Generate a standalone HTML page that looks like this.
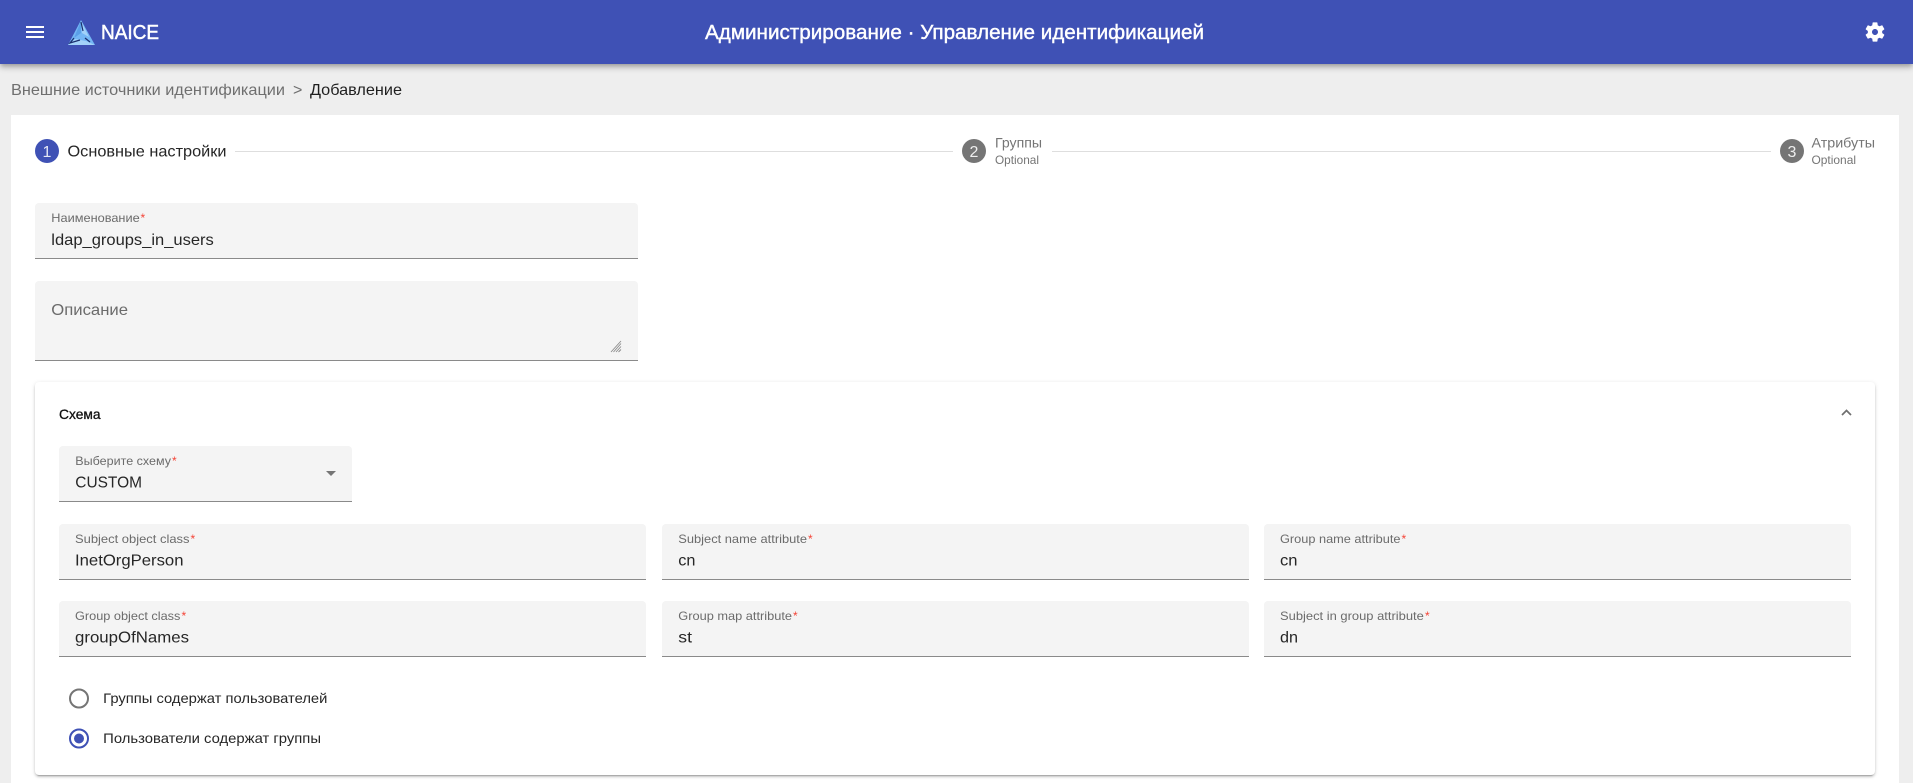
<!DOCTYPE html>
<html lang="ru">
<head>
<meta charset="utf-8">
<title>NAICE</title>
<style>
html,body{margin:0;padding:0;width:1913px;height:783px;overflow:hidden;background:#eeeeee;font-family:"Liberation Sans",sans-serif}
.abs{position:absolute}
#hdr{left:0;top:0;width:1913px;height:64px;background:#3f51b5;box-shadow:0 2px 4px -1px rgba(0,0,0,.2),0 4px 5px 0 rgba(0,0,0,.14),0 1px 10px 0 rgba(0,0,0,.12)}
#card{left:11px;top:115px;width:1888px;height:668px;background:#fff}
.f{position:absolute;background:#f4f4f4;border-radius:4px 4px 0 0;border-bottom:1px solid #8a8a8a;box-sizing:border-box}
#panel{left:35px;top:382px;width:1840px;height:393px;background:#fff;border-radius:4px;box-shadow:0 3px 1px -2px rgba(0,0,0,.2),0 2px 2px 0 rgba(0,0,0,.14),0 1px 5px 0 rgba(0,0,0,.12)}
.ln{position:absolute;top:151px;height:1px;background:#dedede}
svg{position:absolute;left:0;top:0}
text{font-family:"Liberation Sans",sans-serif}
.l{font-size:12px;fill:#6b6b6b}
.v{font-size:16px;fill:#262626}
.s{font-size:12px;fill:#f44336}
.r{font-size:14px;fill:#262626}
</style>
</head>
<body>
<div class="abs" id="hdr"></div>
<div class="abs" id="card"></div>
<div class="ln" style="left:235px;width:718px"></div>
<div class="ln" style="left:1052px;width:719px"></div>
<div class="f" style="left:35px;top:203px;width:603px;height:56px"></div>
<div class="f" style="left:35px;top:281px;width:603px;height:80px"></div>
<div class="abs" id="panel"></div>
<div class="f" style="left:59px;top:446px;width:293px;height:56px"></div>
<div class="f" style="left:59px;top:524px;width:587px;height:56px"></div>
<div class="f" style="left:662px;top:524px;width:587px;height:56px"></div>
<div class="f" style="left:1264px;top:524px;width:587px;height:56px"></div>
<div class="f" style="left:59px;top:601px;width:587px;height:56px"></div>
<div class="f" style="left:662px;top:601px;width:587px;height:56px"></div>
<div class="f" style="left:1264px;top:601px;width:587px;height:56px"></div>

<svg width="1913" height="783" viewBox="0 0 1913 783" xmlns="http://www.w3.org/2000/svg">
  <!-- menu -->
  <rect x="26" y="26" width="18" height="2" fill="#fff"/>
  <rect x="26" y="31" width="18" height="2" fill="#fff"/>
  <rect x="26" y="36" width="18" height="2" fill="#fff"/>
  <!-- logo -->
  <polygon points="81,20 95,45 68,45" fill="#74b6f5"/>
  <polygon points="81,21 89,37 82,33" fill="#a3d2f9"/>
  <polygon points="81,21 81,33 74,38" fill="#5a9fe8"/>
  <polygon points="68,45 75,39 86,41 95,45" fill="#a3d2f9"/>
  <path d="M81 22L83 31M74 38L70 43L80 40M85 38L90 42" stroke="#1a2f6e" stroke-width="1.2" fill="none"/>
  <text x="101" y="39" font-size="20.5" fill="#fff" stroke="#fff" stroke-width=".5" textLength="58" lengthAdjust="spacingAndGlyphs">NAICE</text>
  <text x="705" y="39" font-size="20" fill="#fff" stroke="#fff" stroke-width=".4" textLength="499" lengthAdjust="spacingAndGlyphs">Администрирование · Управление идентификацией</text>
  <!-- gear -->
  <path transform="translate(1863,20)" fill="#fff" d="M19.14 12.94c.04-.3.06-.61.06-.94 0-.32-.02-.64-.07-.94l2.03-1.58c.18-.14.23-.41.12-.61l-1.92-3.32c-.12-.22-.37-.29-.59-.22l-2.39.96c-.5-.38-1.03-.7-1.62-.94l-.36-2.54c-.04-.24-.24-.41-.48-.41h-3.84c-.24 0-.43.17-.47.41l-.36 2.54c-.59.24-1.13.57-1.62.94l-2.39-.96c-.22-.08-.47 0-.59.22L2.74 8.87c-.12.21-.08.47.12.61l2.03 1.58c-.05.3-.09.63-.09.94s.02.64.07.94l-2.03 1.58c-.18.14-.23.41-.12.61l1.92 3.32c.12.22.37.29.59.22l2.39-.96c.5.38 1.03.7 1.62.94l.36 2.54c.05.24.24.41.48.41h3.84c.24 0 .44-.17.47-.41l.36-2.54c.59-.24 1.13-.56 1.62-.94l2.39.96c.22.08.47 0 .59-.22l1.92-3.32c.12-.22.07-.47-.12-.61l-2.01-1.58zM12 15c-1.65 0-3-1.35-3-3s1.35-3 3-3 3 1.35 3 3-1.35 3-3 3z"/>
  <!-- breadcrumb -->
  <text x="11" y="95" font-size="16" fill="#6f6f6f" textLength="274" lengthAdjust="spacingAndGlyphs">Внешние источники идентификации</text>
  <text x="293" y="95" font-size="16" fill="#6f6f6f">&gt;</text>
  <text x="310" y="95" font-size="16" fill="#1f1f1f" textLength="92" lengthAdjust="spacingAndGlyphs">Добавление</text>
  <!-- stepper -->
  <circle cx="47" cy="151" r="12" fill="#3f51b5"/>
  <text x="47" y="157" font-size="16" fill="#e4e7f5" text-anchor="middle">1</text>
  <text x="67.5" y="156.5" font-size="16" fill="#262626" textLength="159" lengthAdjust="spacingAndGlyphs">Основные настройки</text>
  <circle cx="974" cy="151" r="12" fill="#757575"/>
  <text x="974" y="157" font-size="16" fill="#eeeeee" text-anchor="middle">2</text>
  <text x="995" y="147.5" font-size="14" fill="#757575" textLength="47" lengthAdjust="spacingAndGlyphs">Группы</text>
  <text x="995" y="164" font-size="12" fill="#757575" textLength="44" lengthAdjust="spacingAndGlyphs">Optional</text>
  <circle cx="1792" cy="151" r="12" fill="#757575"/>
  <text x="1792" y="157" font-size="16" fill="#eeeeee" text-anchor="middle">3</text>
  <text x="1811.5" y="147.5" font-size="14" fill="#757575" textLength="63.5" lengthAdjust="spacingAndGlyphs">Атрибуты</text>
  <text x="1811.5" y="164" font-size="12" fill="#757575" textLength="44.5" lengthAdjust="spacingAndGlyphs">Optional</text>
  <!-- name -->
  <text class="l" x="51.3" y="222" textLength="88.4" lengthAdjust="spacingAndGlyphs">Наименование</text><text class="s" x="140.5" y="222">*</text>
  <text class="v" x="51.3" y="245" textLength="162.5" lengthAdjust="spacingAndGlyphs">ldap_groups_in_users</text>
  <text x="51.3" y="315" font-size="16" fill="#6b6b6b" textLength="76.7" lengthAdjust="spacingAndGlyphs">Описание</text>
  <path d="M611 352L621 341M613.5 352L621 343.5M616 352L621 346.5M618.5 352L621 349.5" stroke="#8a8a8a" stroke-width=".9" fill="none"/>
  <!-- panel head -->
  <text x="59" y="419" font-size="14" fill="#111" stroke="#111" stroke-width=".3" textLength="41.6" lengthAdjust="spacingAndGlyphs">Схема</text>
  <path d="M1842 415L1846.5 410.5L1851 415" stroke="#6f6f6f" stroke-width="1.7" fill="none"/>
  <!-- select -->
  <text class="l" x="75.3" y="465" textLength="95.7" lengthAdjust="spacingAndGlyphs">Выберите схему</text><text class="s" x="172" y="465">*</text>
  <text class="v" x="75.3" y="487.5" textLength="66.7" lengthAdjust="spacingAndGlyphs">CUSTOM</text>
  <polygon points="326,471 336,471 331,476" fill="#757575"/>
  <!-- row 1 -->
  <text class="l" x="75" y="543" textLength="114.5" lengthAdjust="spacingAndGlyphs">Subject object class</text><text class="s" x="190.5" y="543">*</text>
  <text class="v" x="75" y="565.5" textLength="108.5" lengthAdjust="spacingAndGlyphs">InetOrgPerson</text>
  <text class="l" x="678.3" y="543" textLength="128.7" lengthAdjust="spacingAndGlyphs">Subject name attribute</text><text class="s" x="808" y="543">*</text>
  <text class="v" x="678.3" y="565.5" textLength="17.2" lengthAdjust="spacingAndGlyphs">cn</text>
  <text class="l" x="1280" y="543" textLength="120.5" lengthAdjust="spacingAndGlyphs">Group name attribute</text><text class="s" x="1401.5" y="543">*</text>
  <text class="v" x="1280" y="565.5" textLength="17.5" lengthAdjust="spacingAndGlyphs">cn</text>
  <!-- row 2 -->
  <text class="l" x="75" y="620" textLength="105.4" lengthAdjust="spacingAndGlyphs">Group object class</text><text class="s" x="181.5" y="620">*</text>
  <text class="v" x="75" y="642.5" textLength="114" lengthAdjust="spacingAndGlyphs">groupOfNames</text>
  <text class="l" x="678.3" y="620" textLength="113.7" lengthAdjust="spacingAndGlyphs">Group map attribute</text><text class="s" x="793" y="620">*</text>
  <text class="v" x="678.3" y="642.5" textLength="13.7" lengthAdjust="spacingAndGlyphs">st</text>
  <text class="l" x="1280" y="620" textLength="143.8" lengthAdjust="spacingAndGlyphs">Subject in group attribute</text><text class="s" x="1425" y="620">*</text>
  <text class="v" x="1280" y="642.5" textLength="18" lengthAdjust="spacingAndGlyphs">dn</text>
  <!-- radios -->
  <circle cx="79" cy="698.5" r="9" fill="none" stroke="#757575" stroke-width="2"/>
  <text class="r" x="103.2" y="703" textLength="224.2" lengthAdjust="spacingAndGlyphs">Группы содержат пользователей</text>
  <circle cx="79" cy="738.5" r="9" fill="none" stroke="#3f51b5" stroke-width="2"/>
  <circle cx="79" cy="738.5" r="5" fill="#3f51b5"/>
  <text class="r" x="103.2" y="743" textLength="217.8" lengthAdjust="spacingAndGlyphs">Пользователи содержат группы</text>
</svg>
</body>
</html>
